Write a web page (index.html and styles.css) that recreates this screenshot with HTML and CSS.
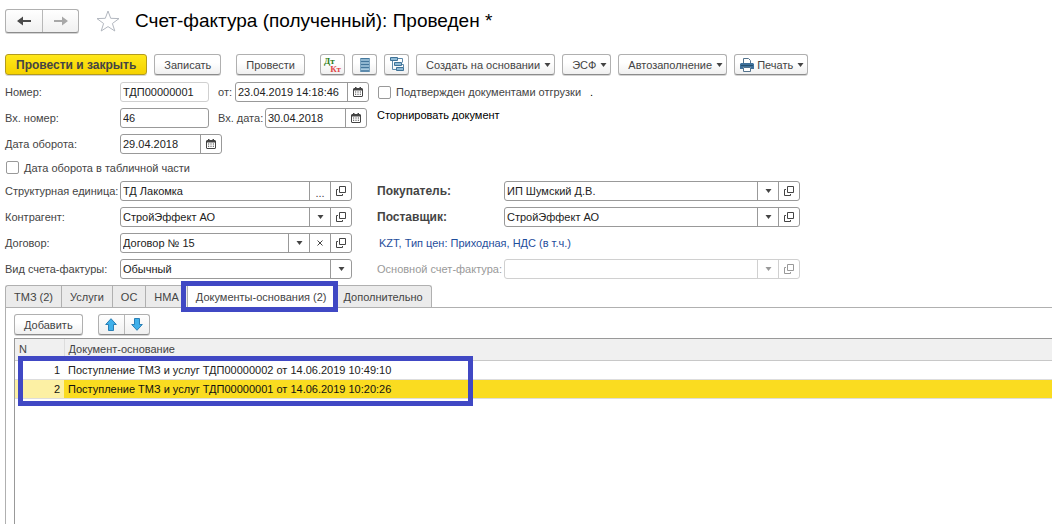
FILE: index.html
```html
<!DOCTYPE html>
<html lang="ru">
<head>
<meta charset="utf-8">
<title>Счет-фактура (полученный)</title>
<link rel="stylesheet" href="styles.css">
</head>
<body>
<svg class="defs" width="0" height="0" aria-hidden="true">
  <symbol id="i-down" viewBox="0 0 7 4"><path d="M0.5 0h6L3.5 4z" fill="currentColor"/></symbol>
  <symbol id="i-open" viewBox="0 0 10 10"><path d="M3.500 .5h6v6h-6zM2 3.500H.5v6h6V8" fill="none" stroke="currentColor"/></symbol>
  <symbol id="i-close" viewBox="0 0 6 6"><path d="M.5 .5l5 5M5.500 .5l-5 5" fill="none" stroke="currentColor"/></symbol>
  <symbol id="i-cal" viewBox="0 0 10 10"><path d="M1 1h1V0h1.500v1h3V0H8v1h1l1 1v7L9 10H1L0 9V2z" fill="currentColor"/><path d="M1 3.500h8V9H1z" fill="#fff"/><path d="M2 4.500h1.200v1H2zM4.400 4.500h1.200v1H4.400zM6.800 4.500H8v1H6.800zM2 6.800h1.200v1H2zM4.400 6.800h1.200v1H4.400zM6.800 6.800H8v1H6.800z" fill="currentColor"/></symbol>
</svg>

<header class="head">
  <div class="nav">
    <button type="button" aria-label="Назад"><svg width="14" height="10" viewBox="0 0 14 10"><path d="M14 4H6V.5L0 5l6 4.500V6h8z" fill="#4a4a4a"/></svg></button>
    <button type="button" aria-label="Вперед"><svg width="14" height="10" viewBox="0 0 14 10"><path d="M0 4h8V.5L14 5 8 9.500V6H0z" fill="#a8a8a8"/></svg></button>
  </div>
  <button type="button" class="star" aria-label="В избранное"><svg width="24" height="22" viewBox="0 0 24 22"><path d="M12 1l2.700 7.300 8.300.3-6.600 4.900L18.800 21 12 16.600 5.200 21l2.400-7.500L1 8.600l8.300-.3z" fill="#fff" stroke="#b2b7bf"/></svg></button>
  <h1>Счет-фактура (полученный): Проведен *</h1>
</header>

<div class="toolbar">
  <button type="button" class="btn main">Провести и закрыть</button>
  <button type="button" class="btn">Записать</button>
  <button type="button" class="btn apart">Провести</button>
  <button type="button" class="btn icon posting apart" aria-label="Движения документа"><span class="dt">Дт</span><span class="kt">Кт</span></button>
  <button type="button" class="btn icon" aria-label="Список"><svg width="12" height="14" viewBox="0 0 12 14"><path d="M1 0h10v14H1z" fill="#a9cbe0"/><path d="M1 .5h10M1 3.500h10M1 6.500h10M1 9.500h10M1 13h10" stroke="#44779c" stroke-width="1.400"/><path d="M1.500 0v14M10.500 0v14" stroke="#7ba4c0"/></svg></button>
  <button type="button" class="btn icon" aria-label="Структура подчиненности"><svg width="16" height="15" viewBox="0 0 16 15"><path d="M8.500 1.500h5v4M3.500 4v8.500h4M12.500 7.500h2v3" fill="none" stroke="#5c89aa"/><path d="M1.500 .5h7v3h-7zM5.500 5.500h7v3h-7zM7.500 10.500h7v3h-7z" fill="#8db9d5" stroke="#3f7297"/></svg></button>
  <button type="button" class="btn">Создать на основании<svg class="caret" width="7" height="4"><use href="#i-down"/></svg></button>
  <button type="button" class="btn">ЭСФ<svg class="caret" width="7" height="4"><use href="#i-down"/></svg></button>
  <button type="button" class="btn">Автозаполнение<svg class="caret" width="7" height="4"><use href="#i-down"/></svg></button>
  <button type="button" class="btn print"><svg width="14" height="14" viewBox="0 0 14 14"><path d="M3.500 6V.5h5l2 2V6" fill="#fff" stroke="#54738c"/><path d="M1 5h12l1 1v5h-3V9H3v2H0V6z" fill="#3f719b"/><path d="M1 7.500h12" stroke="#24506f"/><path d="M3.500 9.500h7v4h-7z" fill="#fff" stroke="#54738c"/></svg>Печать<svg class="caret" width="7" height="4"><use href="#i-down"/></svg></button>
</div>

<form class="form">
  <div class="row">
    <div class="cell">
      <label class="lbl" for="num">Номер:</label>
      <div class="field short soft"><input id="num" value="ТДП00000001"></div>
      <label class="mid" for="dt">от:</label>
      <div class="field datetime"><input id="dt" value="23.04.2019 14:18:46"><button type="button" aria-label="Календарь"><svg width="10" height="10"><use href="#i-cal"/></svg></button></div>
    </div>
    <div class="cell"><input type="checkbox" id="ship"><label class="chk" for="ship">Подтвержден документами отгрузки</label><span class="dot">.</span></div>
  </div>
  <div class="row">
    <div class="cell">
      <label class="lbl" for="inum">Вх. номер:</label>
      <div class="field short"><input id="inum" value="46"></div>
      <label class="mid" for="idt">Вх. дата:</label>
      <div class="field date"><input id="idt" value="30.04.2018"><button type="button" aria-label="Календарь"><svg width="10" height="10"><use href="#i-cal"/></svg></button></div>
    </div>
    <div class="cell storno">Сторнировать документ</div>
  </div>
  <div class="row">
    <div class="cell">
      <label class="lbl" for="odt">Дата оборота:</label>
      <div class="field date"><input id="odt" value="29.04.2018"><button type="button" aria-label="Календарь"><svg width="10" height="10"><use href="#i-cal"/></svg></button></div>
    </div>
  </div>
  <div class="row tick">
    <div class="cell"><input type="checkbox" id="tab"><label class="chk" for="tab">Дата оборота в табличной части</label></div>
  </div>
  <div class="row">
    <div class="cell">
      <label class="lbl" for="unit">Структурная единица:</label>
      <div class="field grow"><input id="unit" value="ТД Лакомка"><button type="button" class="dots" aria-label="Выбрать">...</button><button type="button" aria-label="Открыть"><svg width="10" height="10"><use href="#i-open"/></svg></button></div>
    </div>
    <div class="cell">
      <label class="lbl wide strong" for="buyer">Покупатель:</label>
      <div class="field grow"><input id="buyer" value="ИП Шумский Д.В."><button type="button" aria-label="Список"><svg width="7" height="4"><use href="#i-down"/></svg></button><button type="button" aria-label="Открыть"><svg width="10" height="10"><use href="#i-open"/></svg></button></div>
    </div>
  </div>
  <div class="row">
    <div class="cell">
      <label class="lbl" for="agent">Контрагент:</label>
      <div class="field grow"><input id="agent" value="СтройЭффект АО"><button type="button" aria-label="Список"><svg width="7" height="4"><use href="#i-down"/></svg></button><button type="button" aria-label="Открыть"><svg width="10" height="10"><use href="#i-open"/></svg></button></div>
    </div>
    <div class="cell">
      <label class="lbl wide strong" for="seller">Поставщик:</label>
      <div class="field grow"><input id="seller" value="СтройЭффект АО"><button type="button" aria-label="Список"><svg width="7" height="4"><use href="#i-down"/></svg></button><button type="button" aria-label="Открыть"><svg width="10" height="10"><use href="#i-open"/></svg></button></div>
    </div>
  </div>
  <div class="row">
    <div class="cell">
      <label class="lbl" for="deal">Договор:</label>
      <div class="field grow"><input id="deal" value="Договор № 15"><button type="button" aria-label="Список"><svg width="7" height="4"><use href="#i-down"/></svg></button><button type="button" aria-label="Очистить"><svg width="6" height="6"><use href="#i-close"/></svg></button><button type="button" aria-label="Открыть"><svg width="10" height="10"><use href="#i-open"/></svg></button></div>
    </div>
    <div class="cell"><a class="link" href="#">KZT, Тип цен: Приходная, НДС (в т.ч.)</a></div>
  </div>
  <div class="row">
    <div class="cell">
      <label class="lbl" for="kind">Вид счета-фактуры:</label>
      <div class="field grow"><select id="kind"><option>Обычный</option></select><span class="arrow"><svg width="7" height="4"><use href="#i-down"/></svg></span></div>
    </div>
    <div class="cell off">
      <label class="lbl wide" for="base">Основной счет-фактура:</label>
      <div class="field grow"><input id="base" disabled><button type="button" disabled aria-label="Список"><svg width="7" height="4"><use href="#i-down"/></svg></button><button type="button" disabled aria-label="Открыть"><svg width="10" height="10"><use href="#i-open"/></svg></button></div>
    </div>
  </div>
</form>

<div class="tabs" role="tablist">
  <button type="button" role="tab">ТМЗ (2)</button>
  <button type="button" role="tab">Услуги</button>
  <button type="button" role="tab">ОС</button>
  <button type="button" role="tab">НМА</button>
  <button type="button" role="tab" class="active" aria-selected="true">Документы-основания (2)</button>
  <button type="button" role="tab">Дополнительно</button>
</div>

<section class="panel">
  <div class="commands">
    <button type="button" class="btn">Добавить</button>
    <div class="pair">
      <button type="button" aria-label="Вверх"><svg width="12" height="13" viewBox="0 0 12 13"><path d="M6 .7l5.300 5.800H8.500v6h-5v-6H.7z" fill="#3fb0ea" stroke="#2a7fb5"/></svg></button>
      <button type="button" aria-label="Вниз"><svg width="12" height="13" viewBox="0 0 12 13"><path d="M6 12.300L.7 6.500h2.800v-6h5v6h2.800z" fill="#3fb0ea" stroke="#2a7fb5"/></svg></button>
    </div>
  </div>
  <div class="grid">
    <table>
      <thead><tr><th class="n">N</th><th>Документ-основание</th></tr></thead>
      <tbody>
        <tr><td class="n">1</td><td>Поступление ТМЗ и услуг ТДП00000002 от 14.06.2019 10:49:10</td></tr>
        <tr class="sel"><td class="n">2</td><td>Поступление ТМЗ и услуг ТДП00000001 от 14.06.2019 10:20:26</td></tr>
      </tbody>
    </table>
    <div class="mark"></div>
  </div>
</section>
</body>
</html>
```
FILE: styles.css
```css
* { box-sizing: border-box; }
body {
  margin: 0;
  min-height: 100vh;
  display: flex;
  flex-direction: column;
  padding: 8px 0 0 5px;
  background: #fff;
  color: #444;
  font: 11px/14px "Liberation Sans", Arial, sans-serif;
}
button, input, select { font: inherit; color: inherit; margin: 0; }
button { cursor: pointer; }
svg { display: block; flex: none; }
.defs { position: absolute; }

.head { display: flex; align-items: center; height: 25px; }
.nav, .pair {
  display: flex;
  border: 1px solid #b0b0b0;
  border-bottom-color: #8c8c8c;
  border-radius: 3px;
  background: linear-gradient(#fff, #f0f0f0);
  box-shadow: 0 1px 0 #d4d4d4;
}
.nav button, .pair button {
  display: flex;
  align-items: center;
  justify-content: center;
  border: 0;
  padding: 0;
  background: none;
}
.nav button { width: 36px; height: 22px; }
.nav button + button, .pair button + button { border-left: 1px solid #b8b8b8; }
.star { border: 0; padding: 0; background: none; margin: 0 15px 0 17px; }
h1 { margin: 0; font-size: 19px; line-height: 24px; font-weight: 400; color: #000; }

.toolbar { display: flex; gap: 7px; margin-top: 21px; }
.btn {
  display: flex;
  align-items: center;
  justify-content: center;
  height: 21px;
  padding: 0 9px;
  border: 1px solid #b0b0b0;
  border-bottom-color: #8c8c8c;
  border-radius: 3px;
  background: linear-gradient(#fff 40%, #f0f0f0);
  box-shadow: 0 1px 0 #d4d4d4;
  white-space: nowrap;
}
.btn.main {
  padding: 0 10px;
  border-color: #b39b1e;
  background: linear-gradient(#ffe81a, #f5d200);
  font-size: 12px;
  font-weight: 700;
}
.apart { margin-left: 8px; }
.btn.icon { width: 25px; padding: 0; }
.caret { margin: 1px -6px 0 4px; }
.btn.print { padding-left: 5px; }
.print svg:first-child { margin-right: 3px; }
.btn.posting { flex-direction: column; padding: 0 3px; }
.dt, .kt { font: 700 9px/8px "Liberation Serif", serif; }
.dt { color: #2e7d1a; align-self: flex-start; }
.kt { color: #e04848; align-self: flex-end; }

.form { display: flex; flex-direction: column; gap: 6px; margin-top: 7px; }
.row { display: grid; grid-template-columns: 347px minmax(0, 423px); column-gap: 25px; height: 20px; }
.row.tick { height: 15px; }
.cell { display: flex; align-items: center; white-space: nowrap; }
.lbl { flex: none; width: 115px; }
.lbl.wide { width: 127px; }
.strong { font-size: 12px; font-weight: 700; }
.mid { margin-left: 9px; margin-right: auto; }
.field {
  display: flex;
  height: 20px;
  border: 1px solid #999;
  border-radius: 3px;
  background: #fff;
  color: #222;
  overflow: hidden;
}
.field input, .field select {
  flex: 1;
  min-width: 0;
  border: 0;
  padding: 0 2px;
  background: none;
  outline: 0;
  appearance: none;
}
.field button, .arrow {
  display: flex;
  align-items: center;
  justify-content: center;
  flex: none;
  width: 21px;
  padding: 0;
  border: 0;
  border-left: 1px solid #999;
  background: none;
  color: #444;
}
.grow { flex: 1; }
.short { width: 89px; }
.soft { border-color: #d0d0d0; }
.date { width: 102px; }
.datetime { width: 134px; }
.cell:has(.datetime) { margin-right: -17px; }
.cell:has(.date) { margin-right: -15px; }
.field .dots { padding-top: 3px; }
input[type="checkbox"] {
  appearance: none;
  width: 13px;
  height: 13px;
  border: 1px solid #999;
  border-radius: 2px;
  background: #fff;
  margin-left: 1px;
}
.chk { margin-left: 5px; }
.dot { margin-left: 9px; color: #000; }
.cell.storno { align-items: flex-start; color: #000; }
.link { color: #1f4e9c; text-decoration: none; padding-left: 2px; }
.off { color: #999; }
.off .field, .off .field button { border-color: #d0d0d0; color: #999; }

.tabs { display: flex; margin-top: 6px; position: relative; }
.tabs button {
  position: relative;
  height: 22px;
  padding: 0 8px;
  border: 1px solid #b0b0b0;
  border-right-width: 0;
  border-bottom: 0;
  background: #ebebeb;
  white-space: nowrap;
}
.tabs button:first-child { border-top-left-radius: 3px; }
.tabs button:last-child { border-right-width: 1px; border-top-right-radius: 3px; }
.tabs .active { background: #fff; z-index: 1; }
.tabs .active::after {
  content: "";
  position: absolute;
  inset: -5px -3px -5px -7px;
  border: 5px solid #4048c4;
  pointer-events: none;
}

.panel {
  flex: 1;
  display: flex;
  flex-direction: column;
  border: solid #b0b0b0;
  border-width: 1px 0 0 1px;
  padding: 6px 0 0 8px;
}
.commands { display: flex; gap: 15px; }
.pair button { width: 25px; height: 19px; }
.grid {
  flex: 1;
  position: relative;
  margin-top: 3px;
  border: solid #999;
  border-width: 1px 0 0 1px;
}
table { width: 100%; border-collapse: collapse; }
th, td { padding: 0 4px; text-align: left; font-weight: 400; border-bottom: 1px solid #ddd; height: 19px; }
th { height: 21px; background: #f0f0f0; border-bottom-color: #c8c8c8; }
td { color: #222; }
.n { width: 49px; }
th.n { border-right: 1px solid #ddd; }
td.n { text-align: right; }
.sel td { background: #fadc20; color: #111; }
.sel td.n { background: #fcf0a4; }
.mark {
  position: absolute;
  left: 3px;
  top: 17px;
  width: 455px;
  height: 50px;
  border: 5px solid #4048c4;
  pointer-events: none;
}
```
